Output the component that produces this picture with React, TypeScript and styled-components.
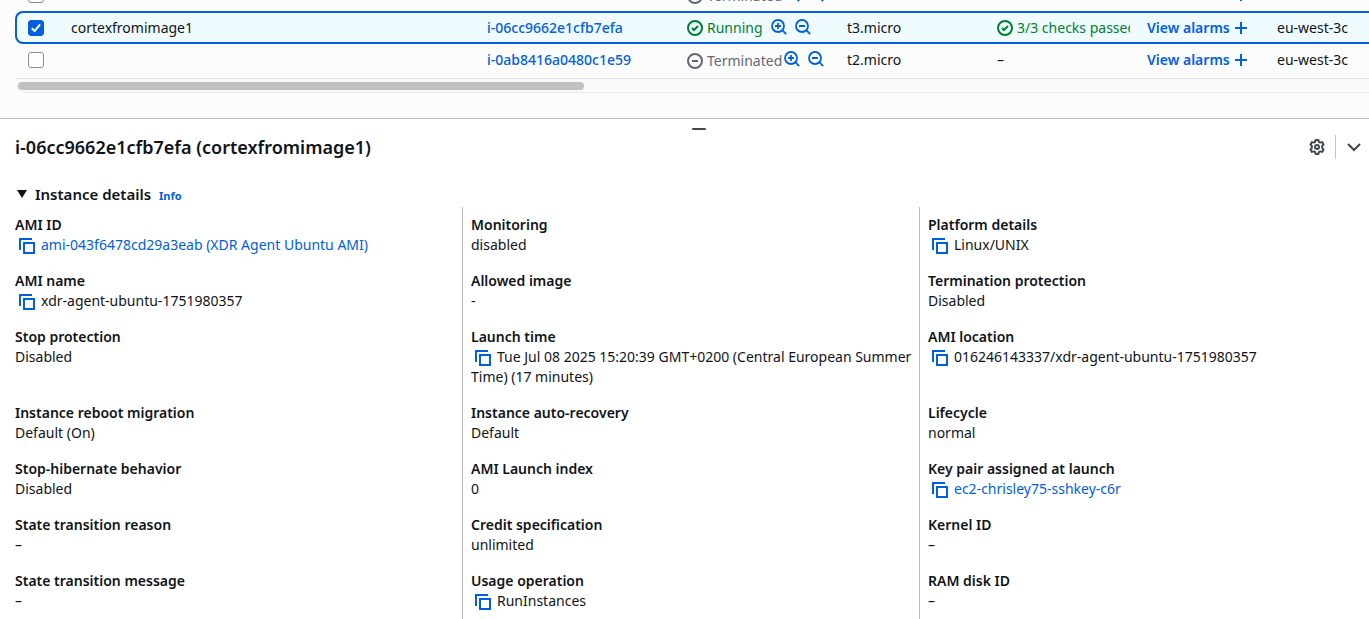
import React from "react";
import styled, { createGlobalStyle, css } from "styled-components";

const blue = "#0060df";
const ink = "#0f141a";

const GlobalStyle = createGlobalStyle`
  *, *::before, *::after { box-sizing: border-box; }
  body {
    margin: 0;
    background: #fcfcfc;
    color: ${ink};
    font: 14px/20px "Noto Sans", "Open Sans", sans-serif;
  }
`;

const Page = styled.div`
  display: flex;
  flex-direction: column;
  height: 100vh;
  overflow: hidden;
`;

const ListPane = styled.section`
  flex: none;
  display: flex;
  flex-direction: column;
  justify-content: flex-end;
  height: 118px;
  padding: 0 0 25px 15px;
  overflow: hidden;
`;

const Table = styled.table`
  flex: none;
  width: 100%;
  min-width: 1354px;
  table-layout: fixed;
  border-collapse: separate;
  border-spacing: 0;
`;

const Col = styled.col<{ $w?: number }>`
  width: ${({ $w }) => ($w ? `${$w}px` : "auto")};
`;

const Row = styled.tr<{ $selected?: boolean }>`
  td {
    height: 33px;
    padding: 0 0 0 10px;
    vertical-align: middle;
    white-space: nowrap;
    overflow: hidden;
  }
  &:last-child td {
    height: 35px;
    padding-bottom: 2px;
    border-bottom: 1px solid #dedee3;
  }
  ${({ $selected }) =>
    $selected &&
    css`
      td {
        background: #f0fbff;
        border-top: 2px solid ${blue};
        border-bottom: 2px solid ${blue};
      }
      td:first-child {
        border-left: 2px solid ${blue};
        border-radius: 8px 0 0 8px;
      }
    `}
`;

const CheckCell = styled.td<{ $selected?: boolean }>`
  && {
    padding-left: ${({ $selected }) => ($selected ? 11 : 13)}px;
  }
`;

const Checkbox = styled.input`
  appearance: none;
  display: block;
  width: 16px;
  height: 16px;
  margin: 0;
  border: 1px solid #8c8c94;
  border-radius: 3px;
  background: #fff;
  &:checked {
    border-color: ${blue};
    background: ${blue}
      url("data:image/svg+xml,%3Csvg xmlns='http://www.w3.org/2000/svg' viewBox='0 0 14 14'%3E%3Cpath d='M2.8 7.3l2.8 2.8 5.4-6.6' fill='none' stroke='white' stroke-width='2'/%3E%3C/svg%3E");
  }
`;

const Link = styled.a<{ $bold?: boolean }>`
  color: ${blue};
  text-decoration: none;
  font-weight: ${({ $bold }) => ($bold ? 600 : 400)};
`;

const IdLink = styled(Link)`
  font-weight: 500;
`;

const Line = styled.div`
  display: flex;
  align-items: center;
  overflow: hidden;
`;

const Status = styled.span<{ $tone: "ok" | "off" }>`
  display: inline-flex;
  align-items: center;
  gap: 4px;
  margin-right: ${({ $tone }) => ($tone === "ok" ? 8 : 2)}px;
  padding-top: ${({ $tone }) => ($tone === "ok" ? 0 : 2)}px;
  color: ${({ $tone }) => ($tone === "ok" ? "#00802f" : "#656871")};
`;

const ChecksLine = styled(Line)`
  margin-right: 7px;
`;

const IconButton = styled.button`
  display: inline-flex;
  flex: none;
  padding: 0;
  border: 0;
  background: none;
  color: inherit;
  cursor: pointer;
`;

const Zooms = styled.span`
  display: inline-flex;
  gap: 8px;
  padding-bottom: 2px;
  color: ${blue};
`;

const Alarms = styled.span`
  display: flex;
  align-items: center;
  gap: 4px;
  color: ${blue};
`;

const Track = styled.div`
  flex: none;
  height: 14px;
  padding: 3px;
  background: #fafafa;
  border-bottom: 1px solid #ebebeb;
  border-radius: 0 0 0 12px;
`;

const Thumb = styled.div`
  width: 42%;
  height: 8px;
  border-radius: 4px;
  background: #c1c1c1;
`;

const DetailPane = styled.section`
  flex: 1;
  min-height: 0;
  overflow: hidden;
  background: #fff;
  border-top: 1px solid #b9bac4;
`;

const Handle = styled.div`
  width: 14px;
  height: 2px;
  margin: 9px 0 0 calc(50% + 7px);
  border-radius: 1px;
  background: #424650;
`;

const PaneHeader = styled.header`
  display: flex;
  align-items: center;
  justify-content: space-between;
  height: 34px;
  padding: 0 7px 0 15px;
`;

const Title = styled.h2`
  margin: 0;
  font-size: 18px;
  line-height: 24px;
  font-weight: 600;
`;

const Actions = styled.div`
  display: flex;
  align-items: center;
  color: #424650;
`;

const Divider = styled.span`
  width: 1px;
  height: 24px;
  margin: 0 10px;
  background: #c6c6cd;
`;

const SectionHead = styled.div`
  display: flex;
  align-items: center;
  height: 24px;
  margin: 18px 0 1px 16px;
`;

const Toggle = styled(IconButton)`
  align-items: center;
  gap: 7px;
  font: inherit;
`;

const SectionTitle = styled.h3`
  margin: 0;
  font-size: 15px;
  line-height: 24px;
  font-weight: 600;
`;

const Info = styled(Link)`
  margin: 4px 0 0 8px;
  font-size: 11px;
  line-height: 16px;
  font-weight: 700;
`;

const Grid = styled.dl`
  display: grid;
  grid-template-columns: repeat(3, 1fr);
  margin: 0 -7px 0 5px;
`;

const Field = styled.div<{ $col: number }>`
  padding: 8px 4px 8px ${({ $col }) => ($col === 0 ? 10 : 8)}px;
  border-left: ${({ $col }) => ($col === 0 ? 0 : "1px solid #b9bac4")};
  dt {
    font-weight: 600;
  }
  dd {
    margin: 0;
  }
`;

const CopyButton = styled(IconButton)`
  margin: 0 6px 0 4px;
  vertical-align: middle;
  color: ${blue};
`;

const Svg = styled.svg`
  display: block;
  flex: none;
  fill: none;
  stroke: currentColor;
  stroke-width: 2;
`;

const StatusIcon = ({ ok }: { ok?: boolean }) => (
  <Svg width="16" height="16" viewBox="0 0 16 16">
    <circle cx="8" cy="8" r="7" />
    {ok ? <path d="M5 8l2 2 4-4" /> : <path d="M5 8h6" />}
  </Svg>
);

const ZoomIcon = ({ plus }: { plus?: boolean }) => (
  <Svg width="16" height="16" viewBox="0 0 16 16">
    <g strokeWidth="1.8">
      <circle cx="7" cy="7" r="6" />
      <path d={plus ? "M4 7h6M7 4v6M11.2 11.2l4 4" : "M4 7h6M11.2 11.2l4 4"} />
    </g>
  </Svg>
);

const CopyIcon = () => (
  <Svg width="16" height="16" viewBox="0 0 16 16">
    <path d="M1 12V1h12" />
    <rect x="5" y="5" width="10" height="10" />
  </Svg>
);

type Instance = {
  id: string;
  name: string;
  running?: boolean;
  type: string;
  checks?: string;
};

const instances: Instance[] = [
  { id: "i-0ab8416a0480c1e", name: "", type: "t2.micro" },
  { id: "i-06cc9662e1cfb7efa", name: "cortexfromimage1", running: true, type: "t3.micro", checks: "3/3 checks passed" },
  { id: "i-0ab8416a0480c1e59", name: "", type: "t2.micro" },
];

type Detail = { label: string; value: string; copy?: boolean; link?: boolean };

const details: Detail[] = [
  { label: "AMI ID", value: "ami-043f6478cd29a3eab (XDR Agent Ubuntu AMI)", copy: true, link: true },
  { label: "Monitoring", value: "disabled" },
  { label: "Platform details", value: "Linux/UNIX", copy: true },
  { label: "AMI name", value: "xdr-agent-ubuntu-1751980357", copy: true },
  { label: "Allowed image", value: "-" },
  { label: "Termination protection", value: "Disabled" },
  { label: "Stop protection", value: "Disabled" },
  { label: "Launch time", value: "Tue Jul 08 2025 15:20:39 GMT+0200 (Central European Summer Time) (17 minutes)", copy: true },
  { label: "AMI location", value: "016246143337/xdr-agent-ubuntu-1751980357", copy: true },
  { label: "Instance reboot migration", value: "Default (On)" },
  { label: "Instance auto-recovery", value: "Default" },
  { label: "Lifecycle", value: "normal" },
  { label: "Stop-hibernate behavior", value: "Disabled" },
  { label: "AMI Launch index", value: "0" },
  { label: "Key pair assigned at launch", value: "ec2-chrisley75-sshkey-c6r", copy: true, link: true },
  { label: "State transition reason", value: "–" },
  { label: "Credit specification", value: "unlimited" },
  { label: "Kernel ID", value: "–" },
  { label: "State transition message", value: "–" },
  { label: "Usage operation", value: "RunInstances", copy: true },
  { label: "RAM disk ID", value: "–" },
];

const InstanceRow = ({ item }: { item: Instance }) => (
  <Row $selected={item.running}>
    <CheckCell $selected={item.running}>
      <Checkbox type="checkbox" defaultChecked={item.running} aria-label={`Select ${item.id}`} />
    </CheckCell>
    <td>{item.name}</td>
    <td><IdLink href="#instance">{item.id}</IdLink></td>
    <td>
      <Line>
        <Status $tone={item.running ? "ok" : "off"}>
          <StatusIcon ok={item.running} />
          {item.running ? "Running" : "Terminated"}
        </Status>
        <Zooms>
          <IconButton aria-label="Filter in"><ZoomIcon plus /></IconButton>
          <IconButton aria-label="Filter out"><ZoomIcon /></IconButton>
        </Zooms>
      </Line>
    </td>
    <td>{item.type}</td>
    <td>
      {item.checks ? (
        <ChecksLine>
          <Status $tone="ok"><StatusIcon ok />{item.checks}</Status>
        </ChecksLine>
      ) : "–"}
    </td>
    <td>
      <Alarms>
        <Link $bold href="#alarms">View alarms</Link>
        <IconButton aria-label="Create alarm">
          <Svg width="14" height="14" viewBox="0 0 14 14"><path d="M7 1v12M1 7h12" /></Svg>
        </IconButton>
      </Alarms>
    </td>
    <td>eu-west-3c</td>
  </Row>
);

export default function App() {
  return (
    <Page>
      <GlobalStyle />
      <ListPane>
        <Table>
          <colgroup>
            <Col $w={46} /><Col $w={416} /><Col $w={200} /><Col $w={160} />
            <Col $w={150} /><Col $w={150} /><Col $w={130} /><Col />
          </colgroup>
          <tbody>
            {instances.map((item) => <InstanceRow key={item.id} item={item} />)}
          </tbody>
        </Table>
        <Track><Thumb /></Track>
      </ListPane>
      <DetailPane>
        <Handle />
        <PaneHeader>
          <Title>i-06cc9662e1cfb7efa (cortexfromimage1)</Title>
          <Actions>
            <IconButton aria-label="Preferences">
              <Svg width="16" height="16" viewBox="0 0 16 16">
                <path strokeLinejoin="round" d="M6.6 1h2.8l.5 1.900 1.300.7 1.900-.5 1.400 2.400-1.300 1.400v2.200l1.300 1.400-1.400 2.400-1.900-.5-1.300.7-.5 1.900H6.600l-.5-1.900-1.300-.7-1.900.5-1.400-2.400 1.300-1.400V6.900L1.500 5.500l1.400-2.400 1.900.5 1.300-.7z" />
                <circle cx="8" cy="8" r="2" />
              </Svg>
            </IconButton>
            <Divider />
            <IconButton aria-label="Collapse panel">
              <Svg width="16" height="16" viewBox="0 0 16 16"><path d="M2 5l6 6 6-6" /></Svg>
            </IconButton>
          </Actions>
        </PaneHeader>
        <SectionHead>
          <Toggle aria-expanded="true">
            <svg width="12" height="10" viewBox="0 0 12 10" fill={ink}><path d="M1 1h10L6 9z" /></svg>
            <SectionTitle>Instance details</SectionTitle>
          </Toggle>
          <Info href="#info">Info</Info>
        </SectionHead>
        <Grid>
          {details.map((d, i) => (
            <Field key={d.label} $col={i % 3}>
              <dt>{d.label}</dt>
              <dd>
                {d.copy && <CopyButton aria-label={`Copy ${d.label}`}><CopyIcon /></CopyButton>}
                {d.link ? <Link href="#detail">{d.value}</Link> : d.value}
              </dd>
            </Field>
          ))}
        </Grid>
      </DetailPane>
    </Page>
  );
}
